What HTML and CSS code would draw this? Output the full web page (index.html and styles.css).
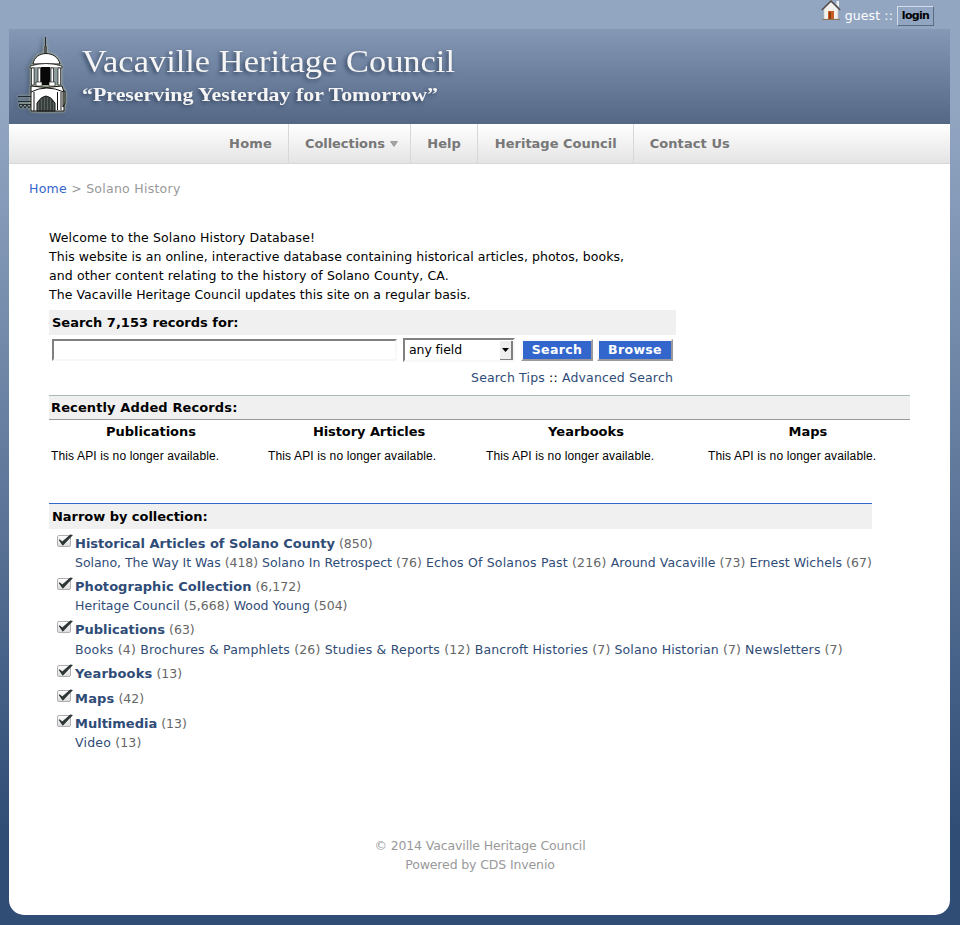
FILE: index.html
```html
<!DOCTYPE html>
<html lang="en">
<head>
<meta charset="utf-8">
<title>Solano History - Vacaville Heritage Council</title>
<link rel="stylesheet" href="styles.css">
</head>
<body>
<svg width="0" height="0" class="defs" aria-hidden="true">
  <defs>
    <linearGradient id="box" x1="0" y1="0" x2="0" y2="1"><stop offset="0" stop-color="#fff"/><stop offset="1" stop-color="#dcdcdc"/></linearGradient>
    <symbol id="check" viewBox="0 0 16 13">
      <rect x=".5" y="1.5" width="13" height="11" rx="1.5" fill="url(#box)" stroke="#b0b0b0"/>
      <path d="M2.2 5.8 5.3 8.2 13.4 1 15 1.300 5.8 11z" fill="#2d3436" stroke="#2d3436" stroke-width="1.100"/>
    </symbol>
  </defs>
</svg>
<div class="userbar">
  <svg class="house" width="20" height="20" viewBox="0 0 20 20">
    <path d="M3 9 10 2l7 7v10H3z" fill="#f4f2ee" stroke="#c8c4bc" stroke-width=".6"/>
    <path d="M15.5 1h2.5v6l-2.5-2z" fill="#eee"/>
    <path d="M.8 10 10 1l9.2 9" fill="none" stroke="#554a48" stroke-width="1.4"/>
    <rect x="7" y="11" width="6" height="8" fill="#c95f22"/><rect x="8" y="12" width="2" height="7" fill="#8e3a10"/>
    <path d="M1 19.5h18" stroke="#8d765a"/>
  </svg>
  <span class="guest">guest ::</span><a class="login">login</a>
</div>
<div class="page">
  <header class="banner">
    <svg width="470" height="95" viewBox="0 0 470 95">
      <g class="glow">
        <path d="M9 67.500h13M9 72.500h13M10 75.500h12" fill="none" stroke="#17202a" stroke-width=".9"/>
        <path d="M10 76l2 3 2-3 2 3 2-3 2 3 2-3" fill="none" stroke="#17202a"/>
        <path d="M36.500 8v17" stroke="#25282c" stroke-width="1.1"/>
        <path d="M35 17h3v7h-3z" fill="#555"/>
        <path d="M24 35c2-14 24-14 27 0z" fill="#fff" stroke="#111"/>
        <path d="M21 37q16-5 32 0v2H21z" fill="#fff" stroke="#111" stroke-width=".8"/>
        <path d="M22 39h30v17H22z" fill="#8c9c9c"/>
        <path d="M32 38h9v18h-9z" fill="#080808"/>
        <path d="M22.500 39h2.600v17h-2.600zM29 39h2.500v15H29zM42 39h2.500v15H42zM49 39h2.600v17H49z" fill="#fff" stroke="#111" stroke-width=".7"/>
        <path d="M27 53h6v4h-6zM40 53h6v4h-6z" fill="#fff" stroke="#111" stroke-width=".6"/>
        <path d="M22 57q15 3 31 0l2 6v19H22z" fill="#fff" stroke="#111"/>
        <path d="M22 63q15-8 33 0" fill="none" stroke="#111"/>
        <path d="M28 82V74q9-14 18 0v8z" fill="#59645f" stroke="#111"/>
        <path d="M31 71v11M34 69v13M37 68v14M40 69v13M43 71v11" stroke="#111" stroke-width=".9"/>
        <path d="M25 63v19M48.500 63v18M52 63v18" stroke="#111"/>
        <path d="M54 62h2v12l-2 4z" fill="#9aa58f" stroke="#111"/>
      </g>
      <text class="title" x="73" y="43" textLength="373" lengthAdjust="spacingAndGlyphs">Vacaville Heritage Council</text>
      <text class="motto" x="73" y="72" textLength="356" lengthAdjust="spacingAndGlyphs">“Preserving Yesterday for Tomorrow”</text>
    </svg>
  </header>
  <nav class="menu">
    <a>Home</a>
    <a class="drop">Collections<svg width="8" height="6" viewBox="0 0 8 6"><path d="M.5.5h7l-3.500 5z" fill="#a5a5a5" stroke="#808080" stroke-width=".6"/></svg></a>
    <a class="help">Help</a>
    <a class="council">Heritage Council</a>
    <a class="contact">Contact Us</a>
  </nav>
  <div class="crumbs"><a>Home</a> &gt; Solano History</div>
  <main>
    <p class="intro"><span class="wide">Welcome to the Solano History Database!</span><br><span class="slight">This website is an online, interactive database containing historical articles, photos, books,</span><br><span class="wide">and other content relating to the history of Solano County, CA.</span><br><span class="slight">The Vacaville Heritage Council updates this site on a regular basis.</span></p>
    <section class="search">
      <h2>Search 7,153 records for:</h2>
      <div class="controls">
        <span class="field"></span>
        <span class="select">any field<i><svg width="7" height="4" viewBox="0 0 7 4"><path d="M0 0h7L3.500 4z"/></svg></i></span>
        <a class="button find">Search</a><a class="button browse">Browse</a>
      </div>
      <div class="tips"><a>Search Tips</a> :: <a>Advanced Search</a></div>
    </section>
    <section class="recent">
      <h2>Recently Added Records:</h2>
      <div class="columns">
        <div><h3>Publications</h3><p>This API is no longer available.</p></div>
        <div><h3 class="articles">History Articles</h3><p>This API is no longer available.</p></div>
        <div><h3>Yearbooks</h3><p>This API is no longer available.</p></div>
        <div><h3>Maps</h3><p>This API is no longer available.</p></div>
      </div>
    </section>
    <section class="narrow">
      <h2>Narrow by collection:</h2>
      <ul>
        <li><svg width="16" height="13"><use href="#check"/></svg><div><b>Historical Articles of Solano County</b> (850)<br><span class="tight"><a>Solano, The Way It Was</a> (418) </span><span class="slight"><a>Solano In Retrospect</a> (76) </span><span class="wider"><a>Echos Of Solanos Past</a> (216) </span><span class="slight"><a>Around Vacaville</a> (73) <a>Ernest Wichels</a> (67)</span></div></li>
        <li><svg width="16" height="13"><use href="#check"/></svg><div><b class="slight">Photographic Collection</b> (6,172)<br><span class="slight"><a>Heritage Council</a> (5,668) </span><a>Wood Young</a> (504)</div></li>
        <li class="tall"><svg width="16" height="13"><use href="#check"/></svg><div><b>Publications</b> (63)<br><span class="wider"><a>Books</a> (4) <a>Brochures &amp; Pamphlets</a> (26) <a>Studies &amp; Reports</a> (12) </span><span class="wide"><a>Bancroft Histories</a> (7) <a>Solano Historian</a> (7) <a>Newsletters</a> (7)</span></div></li>
        <li class="single"><svg width="16" height="13"><use href="#check"/></svg><div><b class="wider">Yearbooks</b> (13)</div></li>
        <li class="single"><svg width="16" height="13"><use href="#check"/></svg><div><b class="wider">Maps</b> (42)</div></li>
        <li><svg width="16" height="13"><use href="#check"/></svg><div><b>Multimedia</b> (13)<br><span class="wider"><a>Video</a> (13)</span></div></li>
      </ul>
    </section>
  </main>
  <footer>© 2014 Vacaville Heritage Council<br>Powered by CDS Invenio</footer>
</div>
</body>
</html>
```
FILE: styles.css
```css
* { box-sizing: border-box; }
html { height: 925px; background: #304d76; }
body {
  margin: 0;
  height: 925px;
  padding: 0 10px 10px 9px;
  display: flex;
  flex-direction: column;
  overflow: hidden;
  background: linear-gradient(#92a6c2 110px, #304d76 830px);
  font: 12.5px/19px "DejaVu Sans", sans-serif;
  color: #000;
}
.defs { position: absolute; }
.tight { letter-spacing: -.03px; }
.slight { letter-spacing: .05px; }
.wide { letter-spacing: .12px; }
.wider { letter-spacing: .19px; }
h2, h3, p, ul { margin: 0; padding: 0; }
h2, h3 { font-size: 13px; }
.userbar {
  height: 29px;
  display: flex;
  justify-content: flex-end;
  align-items: flex-start;
  padding-right: 16px;
  color: #fff;
}
.guest { margin: 6px 4px 0; letter-spacing: .12px; }
.login {
  margin-top: 6px;
  width: 37px;
  height: 20px;
  border: 1px solid;
  border-color: #d3dce7 #596c83 #596c83 #d3dce7;
  color: #000;
  font: bold 11px/18px "DejaVu Sans", sans-serif;
  letter-spacing: -.7px;
  text-align: center;
}
.page {
  flex: 1;
  display: flex;
  flex-direction: column;
  background: #fff;
  border-radius: 0 0 15px 15px;
}
.banner { height: 95px; background: linear-gradient(#8599b7, #546785); }
.banner svg { display: block; }
.glow { filter: drop-shadow(0 0 1.5px #d9e0ae) drop-shadow(-2px 1px 2px #45576f); }
.title, .motto {
  font-family: "Liberation Serif", serif;
  fill: #f5f5f5;
  filter: drop-shadow(-2px 2px 2px #34455f);
}
.title { font-size: 32px; }
.motto { font-size: 19px; font-weight: bold; }
.menu {
  height: 40px;
  display: flex;
  justify-content: center;
  background: linear-gradient(#fff, #e4e4e4);
  border-bottom: 1px solid #d8d8d8;
  font: bold 13px/40px "DejaVu Sans", sans-serif;
  color: #777;
}
.menu a { padding: 0 16px; height: 39px; border-right: 1px solid #d8d8d8; letter-spacing: .15px; }
.menu .drop { padding-right: 12.5px; letter-spacing: -.05px; }
.menu .help { letter-spacing: 0; }
.menu .council { padding-left: 17px; letter-spacing: 0; }
.menu .contact { border: 0; letter-spacing: .08px; }
.menu svg { margin-left: 5px; vertical-align: 1px; }
.crumbs { padding: 15px 20px 0; color: #999; letter-spacing: .26px; }
.crumbs a { color: #36c; }
main { padding: 30px 40px 0; }
.search { width: 627px; margin-top: 6px; }
.search h2, .narrow h2 { padding: 0 3px; height: 25px; line-height: 25px; background: #f0f0f0; }
.controls { display: flex; padding: 3px 3px 0; height: 29px; }
.field { width: 345px; height: 22px; margin: 1px 6px 0 0; border: 2px solid; border-color: #808080 #f8f8f8 #f8f8f8 #808080; }
.select {
  display: flex;
  justify-content: space-between;
  width: 112px;
  height: 24px;
  border: 2px solid;
  border-color: #808080 #f8f8f8 #f8f8f8 #808080;
  padding-left: 4px;
  line-height: 19px;
  letter-spacing: -.1px;
}
.select i {
  width: 13px;
  height: 19px;
  margin-top: 1px;
  background: #eee;
  border-right: 2px solid #808080;
  border-bottom: 1px solid #808080;
  display: flex;
  align-items: center;
  justify-content: center;
}
.button {
  height: 22px;
  margin-top: 1px;
  border: 2px solid;
  border-color: #f8f8f8 #999 #999 #f8f8f8;
  background: #36c;
  color: #fff;
  font-weight: bold;
  line-height: 18px;
  letter-spacing: .35px;
  text-align: center;
}
.find { width: 72px; margin-left: 6px; }
.browse { width: 76px; margin-left: 4px; }
.tips { padding-right: 3px; height: 31px; line-height: 27px; text-align: right; letter-spacing: .16px; }
.tips a, .narrow a, .narrow b { color: #2f4c77; }
.recent { width: 861px; height: 108px; }
.recent h2 { height: 25px; line-height: 23px; padding-left: 2px; background: #f0f0f0; border: solid; border-width: 1px 0; border-color: #abb9b5 transparent #999; letter-spacing: .12px; }
.columns { display: grid; grid-template-columns: 217px 218px 222px 204px; }
.columns h3 { width: 204px; padding-top: 2px; line-height: 20px; text-align: center; }
.columns .articles { width: 206px; letter-spacing: -.08px; }
.columns p { padding: 5px 0 0 2px; font: 12px/18px "Liberation Sans", sans-serif; letter-spacing: .13px; }
.narrow { width: 823px; color: #666; }
.narrow h2 { height: 26px; border-top: 1px solid #36c; color: #000; letter-spacing: -.04px; }
ul { list-style: none; padding: 5px 0 0 8px; }
li { display: flex; white-space: nowrap; margin-bottom: 5px; gap: 2px; }
li svg { flex: none; }
.tall div { line-height: 19.5px; }
.single { margin-bottom: 6px; }
b { font-size: 13px; }
footer { margin-top: auto; padding: 0 0 41px 1px; text-align: center; color: #999; letter-spacing: -.13px; }
```
